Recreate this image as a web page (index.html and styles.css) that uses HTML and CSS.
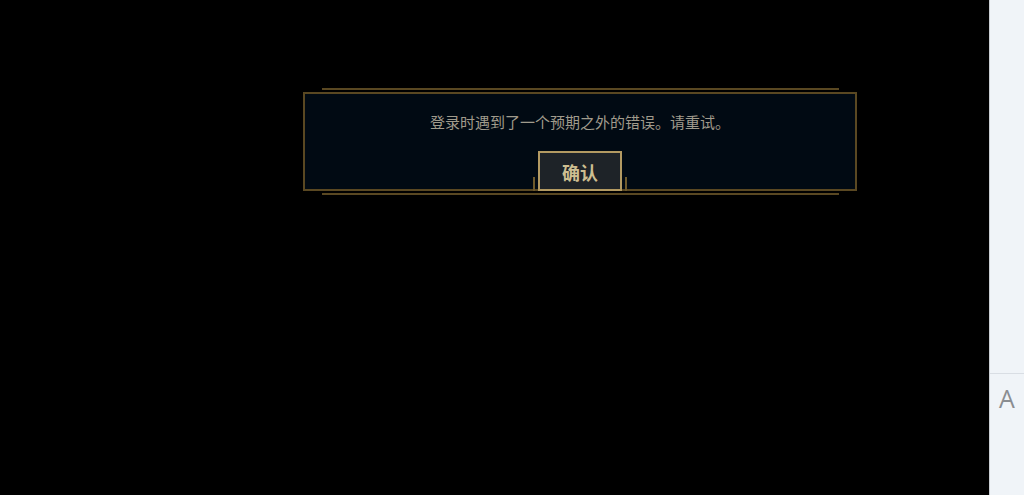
FILE: index.html
```html
<!DOCTYPE html>
<html lang="zh">
<head>
<meta charset="utf-8">
<title>错误</title>
<link rel="stylesheet" href="styles.css">
</head>
<body>
<main class="stage">
  <div class="dialog">
    <p class="message">登录时遇到了一个预期之外的错误。请重试。</p>
    <div class="actions">
      <button class="confirm">确认</button>
    </div>
  </div>
</main>
<aside class="side">
  <div class="side-top"></div>
  <div class="side-bottom"><span class="side-letter">A</span></div>
</aside>
</body>
</html>
```

FILE: styles.css
```css
html, body {
  margin: 0;
  height: 100%;
}
body {
  display: flex;
  background: #000;
  overflow: hidden;
  font-family: "Noto Sans CJK SC", "Liberation Sans", sans-serif;
}
.stage {
  flex: 1;
  padding: 92px 0 0 303px;
  box-sizing: border-box;
}
.dialog {
  position: relative;
  width: 554px;
  box-sizing: border-box;
  border: 2px solid #5a4822;
  background: #010a13;
  display: flex;
  flex-direction: column;
  align-items: center;
}
.dialog::before,
.dialog::after {
  content: "";
  position: absolute;
  left: 17px;
  right: 16px;
  height: 0;
  border-color: #5a4822;
  border-style: solid;
  border-width: 0;
}
.dialog::before {
  top: -6px;
  border-top-width: 2px;
}
.dialog::after {
  bottom: -6px;
  border-bottom-width: 2px;
}
.message {
  margin: 18px 0 19px;
  font-size: 15px;
  line-height: 20px;
  color: #a09b8c;
}
.actions {
  position: relative;
  display: flex;
  margin-bottom: -2px;
}
.actions::before,
.actions::after {
  content: "";
  position: absolute;
  bottom: 0;
  width: 2px;
  height: 14px;
  background: #6e5a2c;
}
.actions::before { left: -5px; }
.actions::after { right: -5px; }
.confirm {
  width: 84px;
  height: 40px;
  box-sizing: border-box;
  border: 2px solid #b39a62;
  background: #1e2328;
  color: #cdbe91;
  font-family: "Noto Sans CJK SC", sans-serif;
  font-size: 18px;
  font-weight: 700;
  line-height: 22px;
  padding: 2px 0 0;
}
.side {
  width: 35px;
  background: #f0f4f8;
  border-left: 1px solid #c9cdd2;
  box-sizing: border-box;
  display: flex;
  flex-direction: column;
}
.side-top {
  height: 373px;
  border-bottom: 1px solid #d9dee4;
}
.side-bottom {
  display: flex;
  justify-content: center;
  padding-top: 9px;
}
.side-letter {
  font-family: "Open Sans", "Liberation Sans", sans-serif;
  font-weight: 400;
  font-size: 25px;
  line-height: 30px;
  color: #8a8d91;
}
```
